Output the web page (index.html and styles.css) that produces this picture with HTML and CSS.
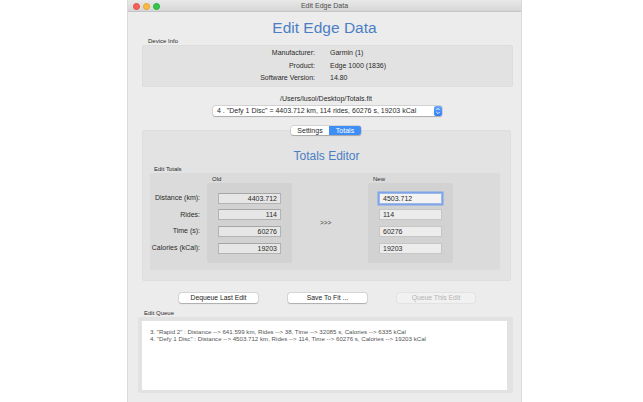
FILE: index.html
```html
<!DOCTYPE html>
<html>
<head>
<meta charset="utf-8">
<title>Edit Edge Data</title>
<link rel="stylesheet" href="styles.css">
</head>
<body>
<div class="window">
  <div class="titlebar">
    <div class="lights">
      <span class="light red"></span>
      <span class="light yellow"></span>
      <span class="light green"></span>
    </div>
    <div class="wintitle">Edit Edge Data</div>
  </div>
  <div class="content">
    <h1 class="main-title">Edit Edge Data</h1>
    <div class="group-label device-label">Device Info</div>
    <div class="device-box">
      <div class="dev-row"><span class="dev-key">Manufacturer:</span><span class="dev-val">Garmin (1)</span></div>
      <div class="dev-row"><span class="dev-key">Product:</span><span class="dev-val">Edge 1000 (1836)</span></div>
      <div class="dev-row"><span class="dev-key">Software Version:</span><span class="dev-val">14.80</span></div>
    </div>
    <div class="path">/Users/lusol/Desktop/Totals.fit</div>
    <div class="popup-row">
      <div class="popup">
        <span class="popup-text">4 . "Defy 1 Disc" = 4403.712 km, 114 rides, 60276 s, 19203 kCal</span>
        <span class="stepper">
          <svg width="8" height="10" viewBox="0 0 8 10"><path d="M2.3 4 L4 2.3 L5.7 4" fill="none" stroke="#fff" stroke-width="0.9"/><path d="M2.3 6 L4 7.7 L5.7 6" fill="none" stroke="#fff" stroke-width="0.9"/></svg>
        </span>
      </div>
    </div>
    <div class="segment-row">
      <div class="segmented">
        <span class="seg seg-off">Settings</span>
        <span class="seg seg-on">Totals</span>
      </div>
    </div>
    <div class="tab-box">
      <h2 class="sub-title">Totals Editor</h2>
      <div class="group-label totals-label">Edit Totals</div>
      <div class="totals-box">
        <div class="col-head old-head">Old</div>
        <div class="col-head new-head">New</div>
        <div class="row-labels">
          <div class="rlabel">Distance (km):</div>
          <div class="rlabel">Rides:</div>
          <div class="rlabel">Time (s):</div>
          <div class="rlabel">Calories (kCal):</div>
        </div>
        <div class="panel old-panel">
          <div class="frow"><div class="field old">4403.712</div></div>
          <div class="frow"><div class="field old">114</div></div>
          <div class="frow"><div class="field old">60276</div></div>
          <div class="frow"><div class="field old">19203</div></div>
        </div>
        <div class="arrows">&gt;&gt;&gt;</div>
        <div class="panel new-panel">
          <div class="frow"><div class="field new focus">4503.712</div></div>
          <div class="frow"><div class="field new">114</div></div>
          <div class="frow"><div class="field new">60276</div></div>
          <div class="frow"><div class="field new">19203</div></div>
        </div>
      </div>
    </div>
    <div class="buttons">
      <div class="btn">Dequeue Last Edit</div>
      <div class="btn">Save To Fit ...</div>
      <div class="btn disabled">Queue This Edit</div>
    </div>
    <div class="group-label queue-label">Edit Queue</div>
    <div class="queue-box">
      <div class="queue-list">
        <div class="qline">3. "Rapid 2" : Distance --&gt; 641.599 km, Rides --&gt; 38, Time --&gt; 32085 s, Calories --&gt; 6335 kCal</div>
        <div class="qline">4. "Defy 1 Disc" : Distance --&gt; 4503.712 km, Rides --&gt; 114, Time --&gt; 60276 s, Calories --&gt; 19203 kCal</div>
      </div>
    </div>
  </div>
</div>
</body>
</html>
```

FILE: styles.css
```css
html, body {
  margin: 0;
  padding: 0;
  background: #ffffff;
  width: 643px;
  height: 402px;
  overflow: hidden;
  font-family: "Liberation Sans", Arial, sans-serif;
  color: #2a2a2a;
}

body {
  display: flex;
  padding-left: 128px;
  box-sizing: border-box;
}

.window {
  width: 393px;
  height: 402px;
  background: #ececec;
  box-shadow: 0 0 0 1px #dadada;
  display: flex;
  flex-direction: column;
}

.titlebar {
  height: 12px;
  box-sizing: border-box;
  background: linear-gradient(#e9e9e9, #d6d6d6);
  border-bottom: 1px solid #c4c4c4;
  position: relative;
  display: flex;
  align-items: center;
  justify-content: center;
}

.lights {
  position: absolute;
  left: 5px;
  top: 2.5px;
  display: flex;
  gap: 3px;
}

.light {
  width: 7px;
  height: 7px;
  border-radius: 50%;
  box-sizing: border-box;
}
.red { background: #fc605c; border: 0.5px solid #de4a45; }
.yellow { background: #fdbc40; border: 0.5px solid #dea135; }
.green { background: #34c84a; border: 0.5px solid #27aa35; }

.wintitle {
  font-size: 7px;
  color: #4d4d4d;
  line-height: 11px;
}

.content {
  display: flex;
  flex-direction: column;
}

.main-title {
  margin: 6px 0 0 0;
  height: 20px;
  line-height: 20px;
  font-size: 15.5px;
  font-weight: normal;
  color: #4b7fc5;
  text-align: center;
}

.group-label {
  font-size: 6px;
  line-height: 6px;
  color: #2a2a2a;
}

.device-label {
  padding-left: 20px;
}

.device-box {
  margin: 1px 0 0 14px;
  width: 371px;
  height: 42px;
  box-sizing: border-box;
  padding-top: 2px;
  background: #e2e2e2;
  border-radius: 3px;
  box-shadow: inset 0 0 0 0.5px #d8d8d8;
}

.dev-row {
  display: grid;
  grid-template-columns: 173px 1fr;
  column-gap: 15px;
  height: 12.5px;
  line-height: 12.5px;
  font-size: 7px;
}
.dev-key { text-align: right; }

.path {
  margin-top: 8px;
  font-size: 7px;
  line-height: 8px;
  text-align: center;
  margin-left: 3px;
}

.popup-row {
  margin-top: 3px;
  padding-left: 85px;
  display: flex;
}

.popup {
  width: 229px;
  height: 10px;
  background: #ffffff;
  border-radius: 2px;
  box-shadow: 0 0 0 0.5px rgba(0,0,0,0.18), 0 0.5px 1px rgba(0,0,0,0.2);
  display: flex;
  align-items: center;
  justify-content: space-between;
  font-size: 7px;
  line-height: 10px;
}
.popup-text { padding-left: 4px; white-space: nowrap; }

.stepper {
  width: 8px;
  height: 10px;
  background: linear-gradient(#69a6fb, #2f7df6);
  border-radius: 2px;
  display: flex;
}

.segment-row {
  margin-top: 10px;
  margin-bottom: -5px;
  padding-left: 163px;
  display: flex;
  position: relative;
  z-index: 2;
}

.segmented {
  display: flex;
  height: 9px;
  border-radius: 2px;
  background: #ffffff;
  box-shadow: 0 0 0 0.5px rgba(0,0,0,0.18), 0 0.5px 1px rgba(0,0,0,0.18);
  font-size: 7px;
  line-height: 9px;
  overflow: hidden;
}
.seg { text-align: center; }
.seg-off { width: 38px; color: #2a2a2a; }
.seg-on { width: 32px; background: #3f8ef5; color: #ffffff; }

.tab-box {
  margin-left: 14px;
  width: 369px;
  height: 151px;
  box-sizing: border-box;
  padding: 18px 0 0 8px;
  background: #e3e3e3;
  border-radius: 3px;
  box-shadow: inset 0 0 0 0.5px #dadada;
}

.sub-title {
  margin: 0;
  height: 16px;
  line-height: 16px;
  font-size: 12px;
  font-weight: normal;
  color: #4b7fc5;
  text-align: center;
  padding-right: 8px;
}

.totals-label {
  margin-top: 2px;
  height: 7px;
  line-height: 7px;
  padding-left: 4px;
}

.totals-box {
  width: 350px;
  height: 97px;
  background: #dbdbdb;
  border-radius: 2px;
  display: grid;
  grid-template-columns: 57px 85px 76px 85px;
  grid-template-rows: 10px 80px;
}

.col-head {
  font-size: 6px;
  line-height: 6px;
  padding: 3px 0 0 5px;
}
.old-head { grid-column: 2; grid-row: 1; }
.new-head { grid-column: 4; grid-row: 1; }

.row-labels {
  grid-column: 1;
  grid-row: 2;
  padding: 7px 7px 0 0;
}
.rlabel {
  height: 16.67px;
  line-height: 16.67px;
  font-size: 7px;
  text-align: right;
}

.panel {
  grid-row: 2;
  background: #d2d2d2;
  border-radius: 2px;
  padding: 7px 0 0 11px;
}
.old-panel { grid-column: 2; }
.new-panel { grid-column: 4; }

.frow {
  height: 16.67px;
  display: flex;
  align-items: center;
}

.field {
  width: 63px;
  height: 11px;
  box-sizing: border-box;
  font-size: 7px;
  line-height: 9px;
  color: #2a2a2a;
}
.field.old {
  background: #e6e6e6;
  border: 1px solid #b3b3b3;
  border-top-color: #a6a6a6;
  text-align: right;
  padding-right: 3px;
}
.field.new {
  background: #ececec;
  border: 1px solid #c6c6c6;
  text-align: left;
  padding-left: 3px;
}
.field.new.focus {
  background: #f3f3f3;
  box-shadow: 0 0 0 1.5px #7ca4ea;
  border-color: #9fb8e6;
}

.arrows {
  grid-column: 3;
  grid-row: 2;
  align-self: center;
  padding-left: 28px;
  font-size: 6.5px;
  line-height: 6px;
  color: #3a3a3a;
}

.buttons {
  margin-top: 12px;
  padding-left: 51px;
  display: flex;
  gap: 30px;
}

.btn {
  width: 79px;
  height: 9.5px;
  background: #ffffff;
  border-radius: 2px;
  box-shadow: 0 0 0 0.5px rgba(0,0,0,0.17), 0 0.5px 1px rgba(0,0,0,0.2);
  font-size: 6.8px;
  line-height: 9.5px;
  text-align: center;
  color: #222;
}
.btn.disabled {
  width: 78px;
  background: #f1f1f1;
  color: #b3b3b3;
  box-shadow: 0 0 0 0.5px rgba(0,0,0,0.08);
}

.queue-label {
  margin-top: 7px;
  padding-left: 16px;
}

.queue-box {
  margin: 1px 0 0 10px;
  width: 375px;
  height: 76px;
  box-sizing: border-box;
  padding: 4px 6px 3px 4px;
  background: #e2e2e2;
  border-radius: 2px;
  display: flex;
}

.queue-list {
  flex: 1;
  background: #ffffff;
  padding: 7px 0 0 8px;
}

.qline {
  font-size: 6.15px;
  line-height: 7.5px;
  color: #555555;
  white-space: nowrap;
}
```
